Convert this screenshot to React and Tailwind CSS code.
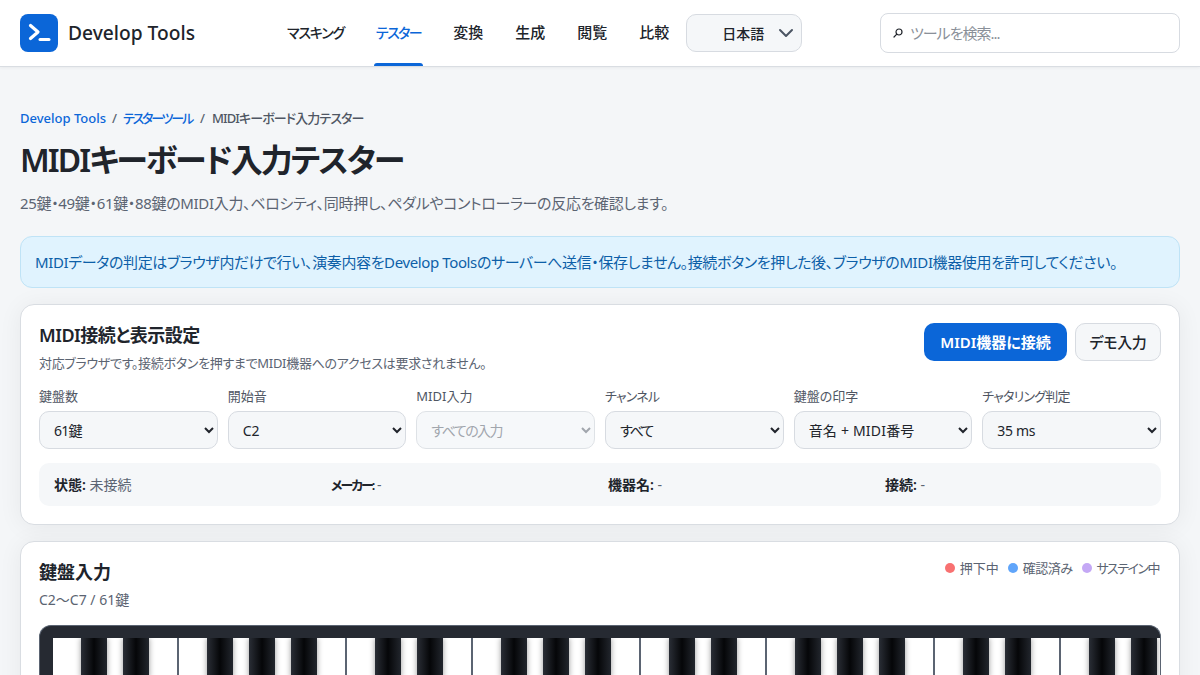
import React from "react";

const nav = [
  ["マスキング", false, "text-[14px] tracking-[-1.2px]"],
  ["テスター", true, "text-[14px] tracking-[-1.5px]"],
  ["変換", false, "text-[15px]"],
  ["生成", false, "text-[15px]"],
  ["閲覧", false, "text-[15px]"],
  ["比較", false, "text-[15px]"],
];

const fields = [
  ["鍵盤数", "61鍵", false, "", "tracking-[-0.8px]"],
  ["開始音", "C2", false, "", ""],
  ["MIDI入力", "すべての入力", true, "", "tracking-[-1.5px]"],
  ["チャンネル", "すべて", false, "tracking-[-0.8px]", "tracking-[-2px]"],
  ["鍵盤の印字", "音名 + MIDI番号", false, "", "tracking-[0.2px]"],
  ["チャタリング判定", "35 ms", false, "tracking-[-0.8px]", "tracking-[-0.3px]"],
];

const info = [
  ["状態:", "未接続", ""],
  ["メーカー:", "-", "text-[13px] tracking-[-2px]"],
  ["機器名:", "-", ""],
  ["接続:", "-", ""],
];

const legend = [
  ["押下中", "bg-[#f87171]", ""],
  ["確認済み", "bg-[#60a5fa]", "tracking-[-0.5px]"],
  ["サステイン中", "bg-[#c4a8f5]", "tracking-[-1.5px]"],
];

const hasBlack = [true, true, false, true, true, true, false];

function Keys() {
  const whites = Array.from({ length: 27 }, (_, i) => i);
  return (
    <div className="flex h-[40px] overflow-hidden">
      {whites.map((i) => (
        <div key={i} className="relative w-[42px] shrink-0 border-r-2 border-[#5b6472] bg-white">
          {hasBlack[i % 7] && (
            <div className="absolute left-[28px] top-0 z-10 h-full w-[26px] bg-[linear-gradient(90deg,#2a2e36_0%,#050608_50%,#22262d_100%)] shadow-[0_0_6px_rgba(0,0,0,0.4)]" />
          )}
        </div>
      ))}
    </div>
  );
}

export default function App() {
  return (
    <div className="h-[675px] overflow-hidden bg-[#f4f6f8] font-['Noto_Sans','Noto_Sans_CJK_JP',sans-serif] text-[#20242b] [font-feature-settings:'palt']">
      <header className="flex h-[67px] items-center border-b border-[#d9dde2] bg-white px-5 shadow-[0_1px_3px_rgba(0,0,0,0.05)]">
        <div className="flex w-[265px] shrink-0 items-center gap-[10px]">
          <svg width="38" height="38" viewBox="0 0 38 38" aria-hidden="true">
            <rect width="38" height="38" rx="8" fill="#0b66d8" />
            <path d="M10.5 11.5 L18 18 L10.5 24.5" fill="none" stroke="#fff" strokeWidth="3.2" strokeLinecap="round" strokeLinejoin="round" />
            <path d="M20 25.5 H29" fill="none" stroke="#fff" strokeWidth="3" strokeLinecap="round" />
          </svg>
          <span className="text-[19.2px] font-medium leading-none">Develop Tools</span>
        </div>
        <nav className="flex h-full items-center gap-[28px]">
          {nav.map(([label, active, size]) => (
            <a
              key={label}
              className={`relative flex h-full items-center px-[2px] pb-[2px] font-medium ${size} ${active ? "text-[#0b66d8]" : "text-[#20242b]"}`}
            >
              {label}
              {active && <span className="absolute bottom-0 left-0 h-[3px] w-full rounded-t-sm bg-[#0b66d8]" />}
            </a>
          ))}
        </nav>
        <div className="ml-[15px] flex h-[38px] w-[116px] items-center justify-end gap-[14px] rounded-[10px] border border-[#d7dbe1] bg-[#f5f7f9] pr-[7px] text-[14px] font-medium">
          日本語
          <svg width="16" height="10" viewBox="0 0 16 10" aria-hidden="true">
            <path d="M2 2 L8 8 L14 2" fill="none" stroke="#4b5563" strokeWidth="2" strokeLinecap="round" strokeLinejoin="round" />
          </svg>
        </div>
        <div className="ml-auto flex h-[40px] w-[300px] items-center gap-[7px] rounded-[8px] border border-[#d7dbe1] bg-white pl-[12px] text-[15px] tracking-[-1px] text-[#8a9099]">
          <svg width="10" height="10" viewBox="0 0 10 10" aria-hidden="true">
            <circle cx="6" cy="4" r="3" fill="none" stroke="#20242b" strokeWidth="1.2" />
            <path d="M3.8 6.2 L1 9" fill="none" stroke="#20242b" strokeWidth="1.2" strokeLinecap="round" />
          </svg>
          ツールを検索...
        </div>
      </header>

      <main className="px-5 pt-[42px]">
        <div className="flex items-center gap-[6px] text-[13px] font-medium leading-[18px]">
          <a className="text-[#0b66d8]">Develop Tools</a>
          <span className="text-[#5b6472]">/</span>
          <a className="pr-[2px] tracking-[-2.2px] text-[#0b66d8]">テスターツール</a>
          <span className="text-[#5b6472]">/</span>
          <span className="ml-[1px] tracking-[-0.9px] text-[#4f5663]">MIDIキーボード入力テスター</span>
        </div>
        <h1 className="mt-[12px] text-[32px] font-semibold leading-[42px] tracking-[-1.9px]">MIDIキーボード入力テスター</h1>
        <p className="mt-[12px] text-[15px] leading-[20px] tracking-[-0.33px] text-[#5b6472]">
          25鍵・49鍵・61鍵・88鍵のMIDI入力、ベロシティ、同時押し、ペダルやコントローラーの反応を確認します。
        </p>

        <div className="mt-[23px] flex h-[52px] items-center rounded-[12px] border border-[#bfe3f6] bg-[#e0f3fe] px-[14px] text-[15px] tracking-[-0.38px] text-[#0d5fa8]">
          MIDIデータの判定はブラウザ内だけで行い、演奏内容をDevelop Toolsのサーバーへ送信・保存しません。接続ボタンを押した後、ブラウザのMIDI機器使用を許可してください。
        </div>

        <section className="mt-[16px] h-[221px] rounded-[14px] border border-[#d9dde2] bg-white px-[18px] pt-[18px] shadow-[0_2px_24px_rgba(0,0,0,0.06)]">
          <div className="flex items-start justify-between">
            <div>
              <h2 className="text-[18px] font-semibold leading-[24px] tracking-[-0.5px]">MIDI接続と表示設定</h2>
              <p className="mt-[7px] text-[13px] leading-[18px] tracking-[-0.3px] text-[#5b6472]">
                対応ブラウザです。接続ボタンを押すまでMIDI機器へのアクセスは要求されません。
              </p>
            </div>
            <div className="flex gap-[8px]">
              <button className="h-[38px] w-[143px] rounded-[10px] bg-[#0b66d8] text-[15px] font-semibold text-white">
                MIDI機器に接続
              </button>
              <button className="h-[38px] w-[86px] rounded-[10px] border border-[#d7dbe1] bg-[#f5f7f9] text-[15px] font-medium tracking-[-0.3px]">
                デモ入力
              </button>
            </div>
          </div>
          <div className="mt-[15px] grid grid-cols-6 gap-x-[10px]">
            {fields.map(([label, value, disabled, lt, vt]) => (
              <label key={label} className="block">
                <span className={`block text-[13px] leading-[18px] text-[#4f5663] ${lt}`}>{label}</span>
                <select
                  disabled={disabled}
                  defaultValue={value}
                  className={`mt-[6px] h-[38px] w-full rounded-[10px] border border-[#d7dbe1] bg-[#f5f7f9] pl-[10px] pr-[1px] text-[14px] ${vt} ${disabled ? "text-[#8a9099] opacity-80" : "text-[#20242b]"}`}
                >
                  <option>{value}</option>
                </select>
              </label>
            ))}
          </div>
          <div className="mt-[14px] grid h-[43px] grid-cols-4 items-center gap-x-[16px] rounded-[10px] bg-[#f5f7f9] px-[15px] text-[14px] text-[#5b6472]">
            {info.map(([k, v, t]) => (
              <div key={k}>
                <b className={`font-semibold text-[#20242b] ${t}`}>{k}</b> {v}
              </div>
            ))}
          </div>
        </section>

        <section className="mt-[16px] h-[200px] rounded-[14px] border border-[#d9dde2] bg-white px-[18px] pt-[18px] shadow-[0_2px_24px_rgba(0,0,0,0.06)]">
          <div className="flex items-start justify-between">
            <div>
              <h2 className="text-[18px] font-semibold leading-[24px]">鍵盤入力</h2>
              <p className="mt-[7px] text-[14px] leading-[18px] text-[#5b6472]">C2〜C7 / 61鍵</p>
            </div>
            <div className="flex items-center gap-[9px] pr-[2px] text-[13px] leading-[16px] text-[#5b6472]">
              {legend.map(([label, color, t]) => (
                <span key={label} className={`flex items-center gap-[5px] ${t}`}>
                  <i className={`h-[10px] w-[10px] rounded-full ${color}`} />
                  {label}
                </span>
              ))}
            </div>
          </div>
          <div className="mt-[16px] overflow-hidden rounded-t-[12px] border border-b-0 border-[#5b6472] bg-[#262a32] pl-[13px] pt-[12px]">
            <Keys />
          </div>
        </section>
      </main>
    </div>
  );
}
